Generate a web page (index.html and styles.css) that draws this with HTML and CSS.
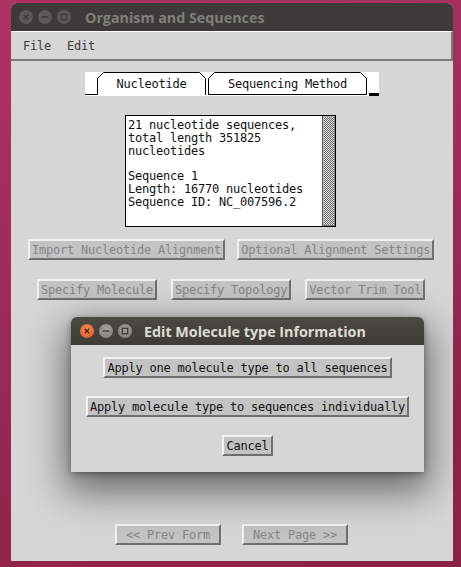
FILE: index.html
```html
<!DOCTYPE html>
<html>
<head>
<meta charset="utf-8">
<link rel="stylesheet" href="styles.css">
</head>
<body>
<div class="desktop">
  <div class="window">
    <div class="titlebar">
      <div class="controls">
        <span class="ctl"><svg viewBox="0 0 14 14"><path d="M4.8 4.8L9.2 9.2M9.2 4.8L4.8 9.2"/></svg></span>
        <span class="ctl"><svg viewBox="0 0 14 14"><path d="M3.8 7H10.2"/></svg></span>
        <span class="ctl"><svg viewBox="0 0 14 14"><rect x="4.3" y="4.3" width="5.4" height="5.4"/></svg></span>
      </div>
      <div class="title">Organism and Sequences</div>
    </div>
    <div class="menubar"><span>File</span><span>Edit</span></div>
    <div class="content">
      <div class="tabstrip">
        <svg class="tab-lines" viewBox="0 0 294 24" width="294" height="24">
          <path d="M0 22.5H12.5V6.5L18.5 0.5H114.5L120.5 6.5V23"/>
          <path d="M123.5 23V6.5L129.5 0.5H275.5L281.5 6.5V22.5H123.5"/>
          <rect x="284" y="21" width="10" height="3" fill="#000" stroke="none"/>
        </svg>
        <div class="tab-lead"></div>
        <div class="tab tab-one">Nucleotide</div>
        <div class="tab tab-two">Sequencing Method</div>
      </div>
      <div class="textbox">
        <div class="text">21 nucleotide sequences,
total length 351825
nucleotides

Sequence 1
Length: 16770 nucleotides
Sequence ID: NC_007596.2</div>
        <div class="scroll"></div>
      </div>
      <div class="row row-one">
        <button class="btn off">Import Nucleotide Alignment</button>
        <button class="btn off">Optional Alignment Settings</button>
      </div>
      <div class="row row-two">
        <button class="btn off">Specify Molecule</button>
        <button class="btn off">Specify Topology</button>
        <button class="btn off">Vector Trim Tool</button>
      </div>
      <div class="row nav">
        <button class="btn off wide">&lt;&lt; Prev Form</button>
        <button class="btn off wide">Next Page &gt;&gt;</button>
      </div>
    </div>
  </div>

  <div class="dialog">
    <div class="titlebar dlg-bar">
      <div class="controls">
        <span class="ctl close"><svg viewBox="0 0 14 14"><path d="M4.8 4.8L9.2 9.2M9.2 4.8L4.8 9.2"/></svg></span>
        <span class="ctl"><svg viewBox="0 0 14 14"><path d="M3.8 7H10.2"/></svg></span>
        <span class="ctl"><svg viewBox="0 0 14 14"><rect x="4.3" y="4.3" width="5.4" height="5.4"/></svg></span>
      </div>
      <div class="title">Edit Molecule type Information</div>
    </div>
    <div class="dlg-body">
      <button class="btn">Apply one molecule type to all sequences</button>
      <button class="btn">Apply molecule type to sequences individually</button>
      <button class="btn">Cancel</button>
    </div>
  </div>
</div>
</body>
</html>
```

FILE: styles.css
```css
html, body {
  margin: 0;
  padding: 0;
}
body {
  width: 461px;
  height: 567px;
  overflow: hidden;
}
.desktop {
  position: relative;
  width: 461px;
  height: 567px;
  overflow: hidden;
  background: linear-gradient(165deg, #ad3460 0%, #9d2a57 45%, #8b2243 100%);
  padding-top: 3px;
  box-sizing: border-box;
}
.window {
  margin-left: 11px;
  width: 442px;
  height: 558px;
  background: #d6d6d6;
  border-radius: 6px 6px 0 0;
  overflow: hidden;
  display: flex;
  flex-direction: column;
}
.titlebar {
  height: 28px;
  flex: none;
  background: #3c3b37;
  display: flex;
  align-items: center;
  padding-left: 8px;
}
.controls {
  display: flex;
  gap: 5px;
}
.ctl {
  width: 14px;
  height: 14px;
  border-radius: 50%;
  background: #5a5955;
  display: block;
}
.ctl svg {
  display: block;
  width: 14px;
  height: 14px;
  fill: none;
  stroke: #3a3935;
  stroke-width: 1.3;
}
.title {
  margin-left: 14px;
  font-family: "Open Sans", "DejaVu Sans", sans-serif;
  font-weight: 700;
  font-size: 14.3px;
  color: #807f7b;
  white-space: nowrap;
}
.menubar {
  height: 30px;
  box-sizing: border-box;
  border-top: 1px solid #fbfbfb;
  border-bottom: 2px solid #7a7a7a;
  border-right: 2px solid #7a7a7a;
  display: flex;
  align-items: center;
  gap: 16px;
  padding-left: 12px;
  font-family: "DejaVu Sans Mono", monospace;
  font-size: 12px;
  letter-spacing: -0.22px;
  color: #3a3a3a;
}
.content {
  flex: 1;
  display: flex;
  flex-direction: column;
  padding-top: 11px;
  padding-bottom: 16px;
  font-family: "DejaVu Sans Mono", monospace;
  font-size: 12px;
  letter-spacing: -0.22px;
}
.tabstrip {
  position: relative;
  width: 294px;
  height: 24px;
  margin-left: 74px;
  background: #fff;
  display: flex;
}
.tab-lines {
  position: absolute;
  left: 0;
  top: 0;
  fill: none;
  stroke: #000;
  stroke-width: 1;
}
.tab-lead {
  width: 12px;
}
.tab {
  position: relative;
  height: 22px;
  line-height: 24px;
  text-align: center;
  color: #111;
}
.tab-one {
  width: 109px;
}
.tab-two {
  margin-left: 2px;
  width: 159px;
}
.textbox {
  display: flex;
  width: 211px;
  height: 112px;
  margin-top: 19px;
  margin-left: 114px;
  box-sizing: border-box;
  border: 1px solid #000;
  background: #fff;
}
.text {
  flex: 1;
  padding: 3px 0 0 2px;
  white-space: pre;
  line-height: 12.8px;
  color: #111;
}
.scroll {
  width: 12px;
  border-left: 1px solid #555;
  background: repeating-conic-gradient(#6e6e6e 0 25%, #dcdcdc 0 50%) 0 0 / 2px 2px;
  box-shadow: inset -1px -1px 0 #7a7a7a, inset 1px 1px 0 #bbb;
}
.row {
  display: flex;
}
.row-one {
  margin-top: 12px;
  padding-left: 17px;
  gap: 12px;
}
.row-two {
  margin-top: 19px;
  padding-left: 26px;
  gap: 14px;
}
.nav {
  margin-top: auto;
  padding-left: 104px;
  gap: 21px;
}
.btn {
  height: 21px;
  box-sizing: border-box;
  margin: 0;
  padding: 0 2px;
  border: 2px solid;
  border-color: #f2f2f2 #6f6f6f #6f6f6f #f2f2f2;
  background: #c3c3c3;
  font-family: "DejaVu Sans Mono", monospace;
  font-size: 12px;
  letter-spacing: -0.22px;
  line-height: 16px;
  color: #111;
  white-space: nowrap;
  border-radius: 0;
}
.btn.off {
  color: #858585;
}
.btn.wide {
  padding: 0 9px;
}
.dialog {
  position: absolute;
  left: 71px;
  top: 317px;
  width: 353px;
  height: 155px;
  background: #d6d6d6;
  border-radius: 6px 6px 0 0;
  box-shadow: 0 14px 38px 6px rgba(0, 0, 0, 0.5), 0 2px 6px rgba(0, 0, 0, 0.35);
  display: flex;
  flex-direction: column;
}
.dlg-bar {
  border-radius: 6px 6px 0 0;
  background: linear-gradient(#4a4944, #3c3b37);
  padding-left: 9px;
}
.dlg-bar .title {
  margin-left: 12px;
  color: #dfdbd2;
}
.dlg-bar .ctl {
  background: radial-gradient(circle at 50% 35%, #a09f9a, #7f7e79);
}
.dlg-bar .ctl.close {
  background: radial-gradient(circle at 50% 35%, #f58a5c, #e2531d);
}
.dlg-bar .ctl svg {
  stroke: #3c3b37;
}
.dlg-bar .ctl.close svg {
  stroke: #4a1e0e;
}
.dlg-body {
  flex: 1;
  display: flex;
  flex-direction: column;
  align-items: center;
  gap: 18px;
  padding-top: 12px;
}
```
